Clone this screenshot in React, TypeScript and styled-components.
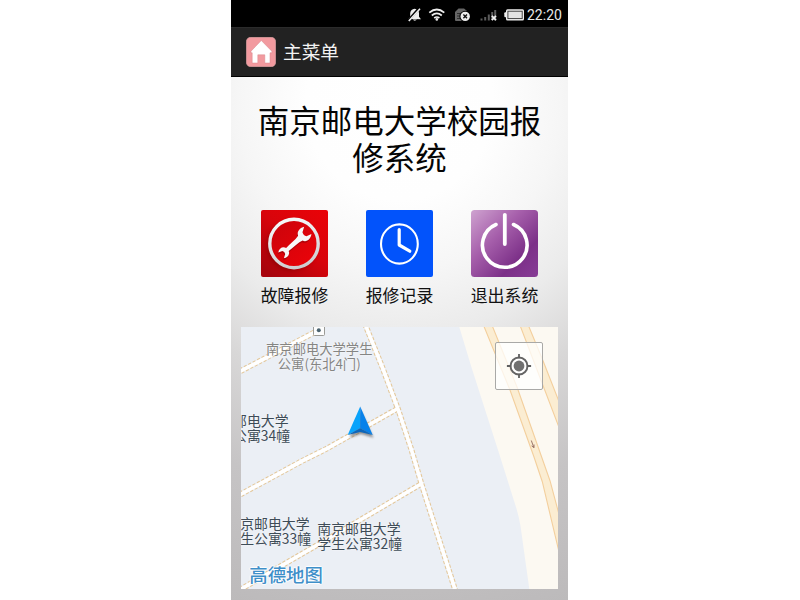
import React from "react";
import styled, { createGlobalStyle } from "styled-components";

const Global = createGlobalStyle`
  body { margin: 0; background: #fff; overflow: hidden; font-family: Roboto, "Noto Sans CJK SC", sans-serif; }
  svg { display: block; }
`;

const Page = styled.div`
  width: 800px;
  height: 600px;
  padding-left: 231px;
  box-sizing: border-box;
`;

const Phone = styled.main`
  width: 337px;
  height: 600px;
  display: flex;
  flex-direction: column;
  overflow: hidden;
`;

const StatusBar = styled.div`
  height: 27px;
  flex: none;
  background: #000;
  display: flex;
  justify-content: flex-end;
  align-items: center;
  box-sizing: border-box;
  padding: 2px 6px 0 0;
`;

const Clock = styled.span`
  color: #e8e8e8;
  font: 14px/20px Roboto, sans-serif;
  width: 35px;
  white-space: nowrap;
  margin-left: 2px;
`;

const AppBar = styled.header`
  height: 50px;
  flex: none;
  box-sizing: border-box;
  background: #222;
  border-top: 1px solid #2b2b2b;
  border-bottom: 1px solid #000;
  display: flex;
  align-items: center;
  gap: 7px;
  padding-left: 15px;
`;

const AppTitle = styled.h1`
  margin: 0 0 2px;
  color: #f3f3f3;
  font: 400 18.7px/28px "Noto Sans CJK SC", sans-serif;
`;

const Body = styled.section`
  flex: 1;
  background: radial-gradient(ellipse 520px 540px at 50% 5%, #fff 0%, #fefefe 18%, #f6f6f6 31%, #ebebeb 43%, #d8d7d7 56%, #c6c4c5 74%, #bbb9ba 100%);
  display: flex;
  flex-direction: column;
  align-items: center;
`;

const Heading = styled.h2`
  margin: 24px 0 0;
  height: 77px;
  width: 300px;
  text-align: center;
  color: #050505;
  font: 400 31.5px/37px "Noto Sans CJK SC", sans-serif;
`;

const Menu = styled.nav`
  display: flex;
  gap: 38px;
  margin-top: 32px;
  margin-right: 1px;
`;

const MenuItem = styled.div`
  width: 67px;
  display: flex;
  flex-direction: column;
  align-items: center;
`;

const Caption = styled.span`
  margin: 5px 0 0 1px;
  white-space: nowrap;
  color: #111;
  font: 400 16.9px/25px "Noto Sans CJK SC", sans-serif;
`;

const MapPanel = styled.div`
  position: relative;
  width: 316.5px;
  height: 262px;
  margin-top: 20px;
  overflow: hidden;
`;

const PlaceLabel = styled.div<{ $x: number; $y: number; $w: number; $size?: number; $line?: number; $color?: string; $align?: string }>`
  position: absolute;
  left: ${p => p.$x}px;
  top: ${p => p.$y}px;
  width: ${p => p.$w}px;
  text-align: ${p => p.$align ?? "left"};
  white-space: nowrap;
  color: ${p => p.$color ?? "#3e4c57"};
  font: 400 ${p => p.$size ?? 13.9}px/${p => p.$line ?? 15}px "Noto Sans CJK SC", sans-serif;
  text-shadow: 0 0 2px #fff;
`;

const MapBrand = styled.div`
  position: absolute;
  left: 8px;
  top: 234px;
  color: #3f8fc9;
  font: 500 18.4px/26px "Noto Sans CJK SC", sans-serif;
  text-shadow: 1px 0 1px #fff, -1px 0 1px #fff, 0 1px 1px #fff, 0 -1px 1px #fff;
`;

const LocateButton = styled.button`
  position: absolute;
  left: 254px;
  top: 15px;
  width: 48px;
  height: 48px;
  padding: 0;
  display: flex;
  align-items: center;
  justify-content: center;
  background: rgba(255, 255, 255, 0.75);
  border: 1px solid #a9a9a7;
  border-radius: 2px;
`;

const StatusIcons = () => (
  <svg width="120" height="20" viewBox="405 4 120 20">
    <g fill="#eee">
      <path d="M408.4 18 L410.2 15.8 V12 Q410.8 8.2 414.6 7.8 Q418.6 8.2 419 12 V15.8 L421 18.3Z" />
      <path d="M412.6 18.6 h4.4 q-2.2 2.2 -4.4 0" />
    </g>
    <path d="M419.2 7.2 L407.8 20.1" stroke="#000" strokeWidth="2.6" />
    <path d="M420 7.7 L408.8 20" stroke="#eee" strokeWidth="1.6" />
    <g fill="none" stroke="#eee" strokeWidth="1.7">
      <path d="M429.3 11.7 Q436.8 5.3 444.3 11.7" />
      <path d="M431.8 14.5 Q436.8 10.3 441.8 14.5" />
      <path d="M434.2 17 Q436.8 15 439.4 17" />
    </g>
    <circle cx="436.8" cy="18.4" r="1.3" fill="#eee" />
    <path d="M455 11 L458.5 7.5 H464 L467 10 V20 H456 Q455 20 455 19Z" fill="#666" />
    <path d="M457 12.5 h7 M457 15 h5 M457 17.5 h4 M460 12 v6" stroke="#222" strokeWidth=".8" />
    <circle cx="465.2" cy="15.4" r="5.6" fill="#000" />
    <circle cx="465.2" cy="15.4" r="4.7" fill="#eee" />
    <path d="M463.4 13.6 l3.6 3.6 m0 -3.6 l-3.6 3.6" stroke="#111" strokeWidth="1.4" />
    <g fill="#5b5b5b">
      <rect x="480.5" y="17.5" width="2" height="2" />
      <rect x="484.2" y="16" width="2" height="3.5" />
      <rect x="487.8" y="13.5" width="2" height="6" />
      <rect x="491.2" y="11" width="2" height="8" />
      <rect x="494.2" y="9" width="2" height="10.5" />
    </g>
    <path d="M491.8 14.8 l4.2 4.4 m0 -4.4 l-4.2 4.4" stroke="#eee" strokeWidth="1.7" />
    <rect x="506" y="8.2" width="18" height="11.3" rx="1.5" fill="#eee" />
    <rect x="504.3" y="11.2" width="2.5" height="5" rx="1" fill="#eee" />
    <rect x="507.9" y="10.2" width="14.3" height="7.4" fill="#e3e3e3" stroke="#333" strokeWidth=".9" />
  </svg>
);

const HomeIcon = () => (
  <svg width="30" height="30" viewBox="0 0 30 30">
    <rect x=".3" y=".3" width="29.4" height="29.4" rx="4.5" fill="#f29a9f" stroke="#d8a4a6" strokeWidth=".6" />
    <path d="M15.3 3.5 L25.8 14.2 V15.8 H24 V26 H18.8 V17.8 H11.8 V26 H6.2 V15.8 H5 V14.2Z" fill="#fff" stroke="#d8868c" strokeWidth=".5" />
  </svg>
);

const wrench = "M-10 -2 Q-6 -2.6 0 -2.6 Q5 -2.6 8.2 -3.6 C9.6 -7.6 14.5 -9 19.4 -6.6 L14.2 -3.4 Q12.6 0 14.6 2.6 L20 4.4 C16 8.2 10.2 7.8 8.4 3.4 Q5 2.4 0 2.4 Q-6 2.4 -10 2 C-11 5.6 -15 6.8 -19 4.6 L-15 2.2 Q-13.8 0 -15.2 -2.2 L-19.4 -4 C-16 -6.8 -11.4 -6 -10 -2Z";

const RepairIcon = () => (
  <svg width="67" height="67" viewBox="0 0 67 67">
    <defs>
      <linearGradient id="red" x1="1" y1="0" x2=".2" y2="1">
        <stop offset="0" stopColor="#ea0208" />
        <stop offset=".5" stopColor="#d8040b" />
        <stop offset="1" stopColor="#a8040c" />
      </linearGradient>
      <linearGradient id="redInner" x1="0" y1="0" x2="1" y2="1">
        <stop offset="0" stopColor="#c9040c" />
        <stop offset="1" stopColor="#ee0309" />
      </linearGradient>
      <linearGradient id="ring" x1=".3" y1="0" x2=".6" y2="1">
        <stop offset="0" stopColor="#f6fafb" />
        <stop offset="1" stopColor="#cdcdd0" />
      </linearGradient>
      <filter id="soft" x="-30%" y="-30%" width="160%" height="160%"><feGaussianBlur stdDeviation="2" /></filter>
    </defs>
    <rect width="67" height="67" rx="2" fill="url(#red)" />
    <circle cx="30.5" cy="36" r="25" fill="#7a0006" opacity=".5" filter="url(#soft)" />
    <circle cx="33" cy="33.5" r="24.2" fill="url(#redInner)" stroke="url(#ring)" strokeWidth="3.4" />
    <g transform="translate(33.5 33.3) rotate(-41) scale(.94)">
      <path d={wrench} fill="#7a0006" opacity=".45" transform="translate(-1.6 1)" />
      <path d={wrench} fill="#f8f8f8" />
    </g>
  </svg>
);

const HistoryIcon = () => (
  <svg width="67" height="67" viewBox="0 0 67 67">
    <rect width="67" height="67" rx="2" fill="#0253fb" />
    <ellipse cx="33.4" cy="34" rx="18.4" ry="19.6" fill="none" stroke="#fff" strokeWidth="2.1" />
    <path d="M33.2 19.5 V35 L43.8 41.2" fill="none" stroke="#fff" strokeWidth="3.2" strokeLinecap="round" strokeLinejoin="round" />
  </svg>
);

const ExitIcon = () => (
  <svg width="67" height="67" viewBox="0 0 67 67">
    <defs>
      <linearGradient id="purple" x1="0" y1="0" x2="1" y2="1">
        <stop offset="0" stopColor="#cfa3d0" />
        <stop offset=".38" stopColor="#a65fab" />
        <stop offset=".72" stopColor="#7c3088" />
        <stop offset="1" stopColor="#873c96" />
      </linearGradient>
    </defs>
    <rect width="67" height="67" rx="3.5" fill="url(#purple)" />
    <path d="M25 14.5 A22.3 22.3 0 1 0 42.5 14.5" fill="none" stroke="#fff" strokeWidth="3.6" strokeLinecap="round" />
    <path d="M33.8 4.8 V34" stroke="#fff" strokeWidth="3.8" strokeLinecap="round" />
  </svg>
);

const paths = [
  "M236 373.5 L319 330",
  "M236 496.8 L302 461 L326 449 L397 409",
  "M236 592 L350 526 L421 484",
  "M365 324 L383 369 L398 409 L411.5 450 L421.5 484 L455.5 591",
];

const CityMap = () => (
  <svg width="316.5" height="262" viewBox="241 327 316.5 262">
    <rect x="241" y="327" width="317" height="262" fill="#ebeff5" />
    <path d="M459.3 327 L471.7 368 L498 450 L515 504 Q519 516 520.5 526 L529.3 589 H558 V327Z" fill="#fcf9f2" />
    <path d="M483 324 L510 390 L534 457 L542.3 481.7 L560 556 V518 L550 480.7 L517 387 L491.5 324Z" fill="#fbedd2" stroke="#f3cf9d" strokeWidth="1.1" />
    <path d="M519.5 324 L560 430 V404 L542.7 360 L527.8 324Z" fill="#fbedd2" stroke="#f3cf9d" strokeWidth="1.1" />
    <path d="M531.3 440.5 l2.5 7 m.2 -3 v3.2 l-2.4 -1.8" fill="none" stroke="#9c7668" strokeWidth="1" />
    <g fill="none" stroke="#e3c79a" strokeWidth="5.8" strokeDasharray="3.2 1.8">{paths.map(d => <path key={d} d={d} />)}</g>
    <g fill="none" stroke="#fff" strokeWidth="3.7">{paths.map(d => <path key={d} d={d} />)}</g>
    <rect x="313.5" y="321" width="11" height="14.5" rx="1" fill="#fdfdfd" stroke="#9b9b96" strokeWidth="1" />
    <circle cx="318.8" cy="330.2" r="2" fill="#4c6470" />
  </svg>
);

const PositionLayer = styled.div`
  position: absolute;
  left: 103px;
  top: 78px;
`;

const PositionArrow = () => (
  <svg width="34" height="40" viewBox="344 405 34 40">
    <defs><filter id="arrowShade" x="-30%" y="-30%" width="160%" height="160%"><feGaussianBlur stdDeviation="1.2" /></filter></defs>
    <path d="M361 411 L373.5 437.8 L361 434 L349.5 437.8Z" fill="#555" opacity=".6" filter="url(#arrowShade)" />
    <path d="M360.2 406.5 L347.7 435 L360.2 428.2Z" fill="#08a3fb" />
    <path d="M360.2 406.5 L372.7 435 L360.2 428.2Z" fill="#0781ea" />
    <path d="M347.7 435 L360.2 428.2 L372.7 435 L360.2 432Z" fill="#0b66bb" />
  </svg>
);

const LocateIcon = () => (
  <svg width="26" height="26" viewBox="0 0 26 26">
    <circle cx="13" cy="13" r="8.5" fill="#fff" stroke="#656565" strokeWidth="1.9" />
    <circle cx="13" cy="13" r="5.4" fill="#707070" />
    <path d="M13 .9 V5.2 M13 20.8 V25.1 M.9 13 H5.2 M20.8 13 H25.1" stroke="#606060" strokeWidth="1.8" />
  </svg>
);

const menu = [
  { label: "故障报修", Icon: RepairIcon },
  { label: "报修记录", Icon: HistoryIcon },
  { label: "退出系统", Icon: ExitIcon },
];

export default function App() {
  return (
    <Page>
      <Global />
      <Phone>
        <StatusBar><StatusIcons /><Clock>22:20</Clock></StatusBar>
        <AppBar><HomeIcon /><AppTitle>主菜单</AppTitle></AppBar>
        <Body>
          <Heading>南京邮电大学校园报<br />修系统</Heading>
          <Menu>
            {menu.map(({ label, Icon }) => (
              <MenuItem key={label}><Icon /><Caption>{label}</Caption></MenuItem>
            ))}
          </Menu>
          <MapPanel>
            <CityMap />
            <PlaceLabel $x={24} $y={14} $w={108} $size={13.3} $line={15} $color="#858583" $align="center">南京邮电大学学生<br />公寓(东北4门)</PlaceLabel>
            <PlaceLabel $x={-36} $y={86} $w={85}>南京邮电大学<br />学生公寓34幢</PlaceLabel>
            <PlaceLabel $x={-15} $y={189} $w={85}>南京邮电大学<br />学生公寓33幢</PlaceLabel>
            <PlaceLabel $x={76} $y={194} $w={85}>南京邮电大学<br />学生公寓32幢</PlaceLabel>
            <MapBrand>高德地图</MapBrand>
            <PositionLayer><PositionArrow /></PositionLayer>
            <LocateButton aria-label="定位"><LocateIcon /></LocateButton>
          </MapPanel>
        </Body>
      </Phone>
    </Page>
  );
}
